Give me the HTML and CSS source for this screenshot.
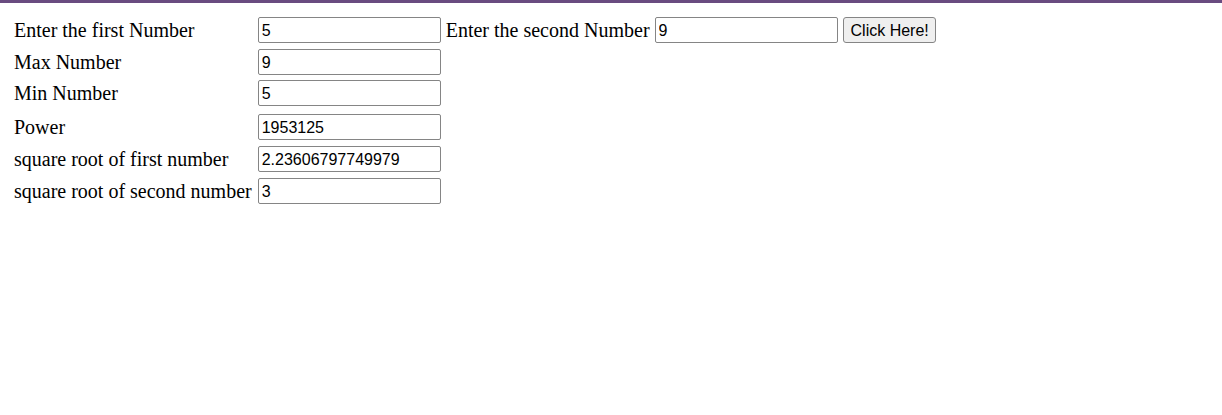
FILE: index.html
```html
<!DOCTYPE html>
<html>
<head>
<meta charset="utf-8">
<title>Numbers</title>
<link rel="stylesheet" href="styles.css">
</head>
<body>
<div class="topbar"></div>
<div class="page">
  <table class="calc">
    <tr>
      <td class="label">Enter the first Number</td>
      <td><input class="field" type="text" value="5"></td>
      <td class="label second">Enter the second Number</td>
      <td><input class="field" type="text" value="9"></td>
      <td class="btncell"><button class="btn">Click Here!</button></td>
    </tr>
    <tr class="tight">
      <td class="label">Max Number</td>
      <td><input class="field" type="text" value="9"></td>
    </tr>
    <tr>
      <td class="label">Min Number</td>
      <td><input class="field" type="text" value="5"></td>
    </tr>
    <tr class="power">
      <td class="label">Power</td>
      <td><input class="field" type="text" value="1953125"></td>
    </tr>
    <tr>
      <td class="label">square root of first number</td>
      <td><input class="field" type="text" value="2.23606797749979"></td>
    </tr>
    <tr>
      <td class="label">square root of second number</td>
      <td><input class="field" type="text" value="3"></td>
    </tr>
  </table>
</div>
</body>
</html>
```

FILE: styles.css
```css
html, body {
  margin: 0;
  padding: 0;
  background: #ffffff;
}

.topbar {
  height: 3px;
  background: #694b80;
}

.page {
  padding: 10px 10px 0 10px;
  font-family: "Liberation Serif", "Times New Roman", serif;
  font-size: 20px;
  color: #000;
}

.calc {
  border-collapse: separate;
  border-spacing: 2px 2px;
}

.calc td {
  padding: 2px 2px;
  vertical-align: middle;
  white-space: nowrap;
}

.calc td.label {
  padding-right: 2px;
}

.calc td.second {
  padding-left: 1px;
  padding-right: 1px;
}

.calc td.btncell {
  padding-left: 1px;
}

.calc tr.tight td {
  padding-bottom: 1px;
}

.calc tr.power td {
  padding-top: 4px;
}

.field {
  display: block;
  box-sizing: border-box;
  width: 183px;
  height: 26px;
  margin: 0;
  padding: 2px 3px 0 3px;
  border: 1px solid #858585;
  border-radius: 2px;
  font-family: "Liberation Sans", Arial, sans-serif;
  font-size: 16px;
  color: #000;
  background: #fff;
}

.btn {
  display: block;
  box-sizing: border-box;
  height: 26px;
  margin: 0;
  padding: 1px 6px 0 7px;
  border: 1px solid #858585;
  border-radius: 3px;
  background: #efefef;
  font-family: "Liberation Sans", Arial, sans-serif;
  font-size: 16px;
  color: #000;
}
```
